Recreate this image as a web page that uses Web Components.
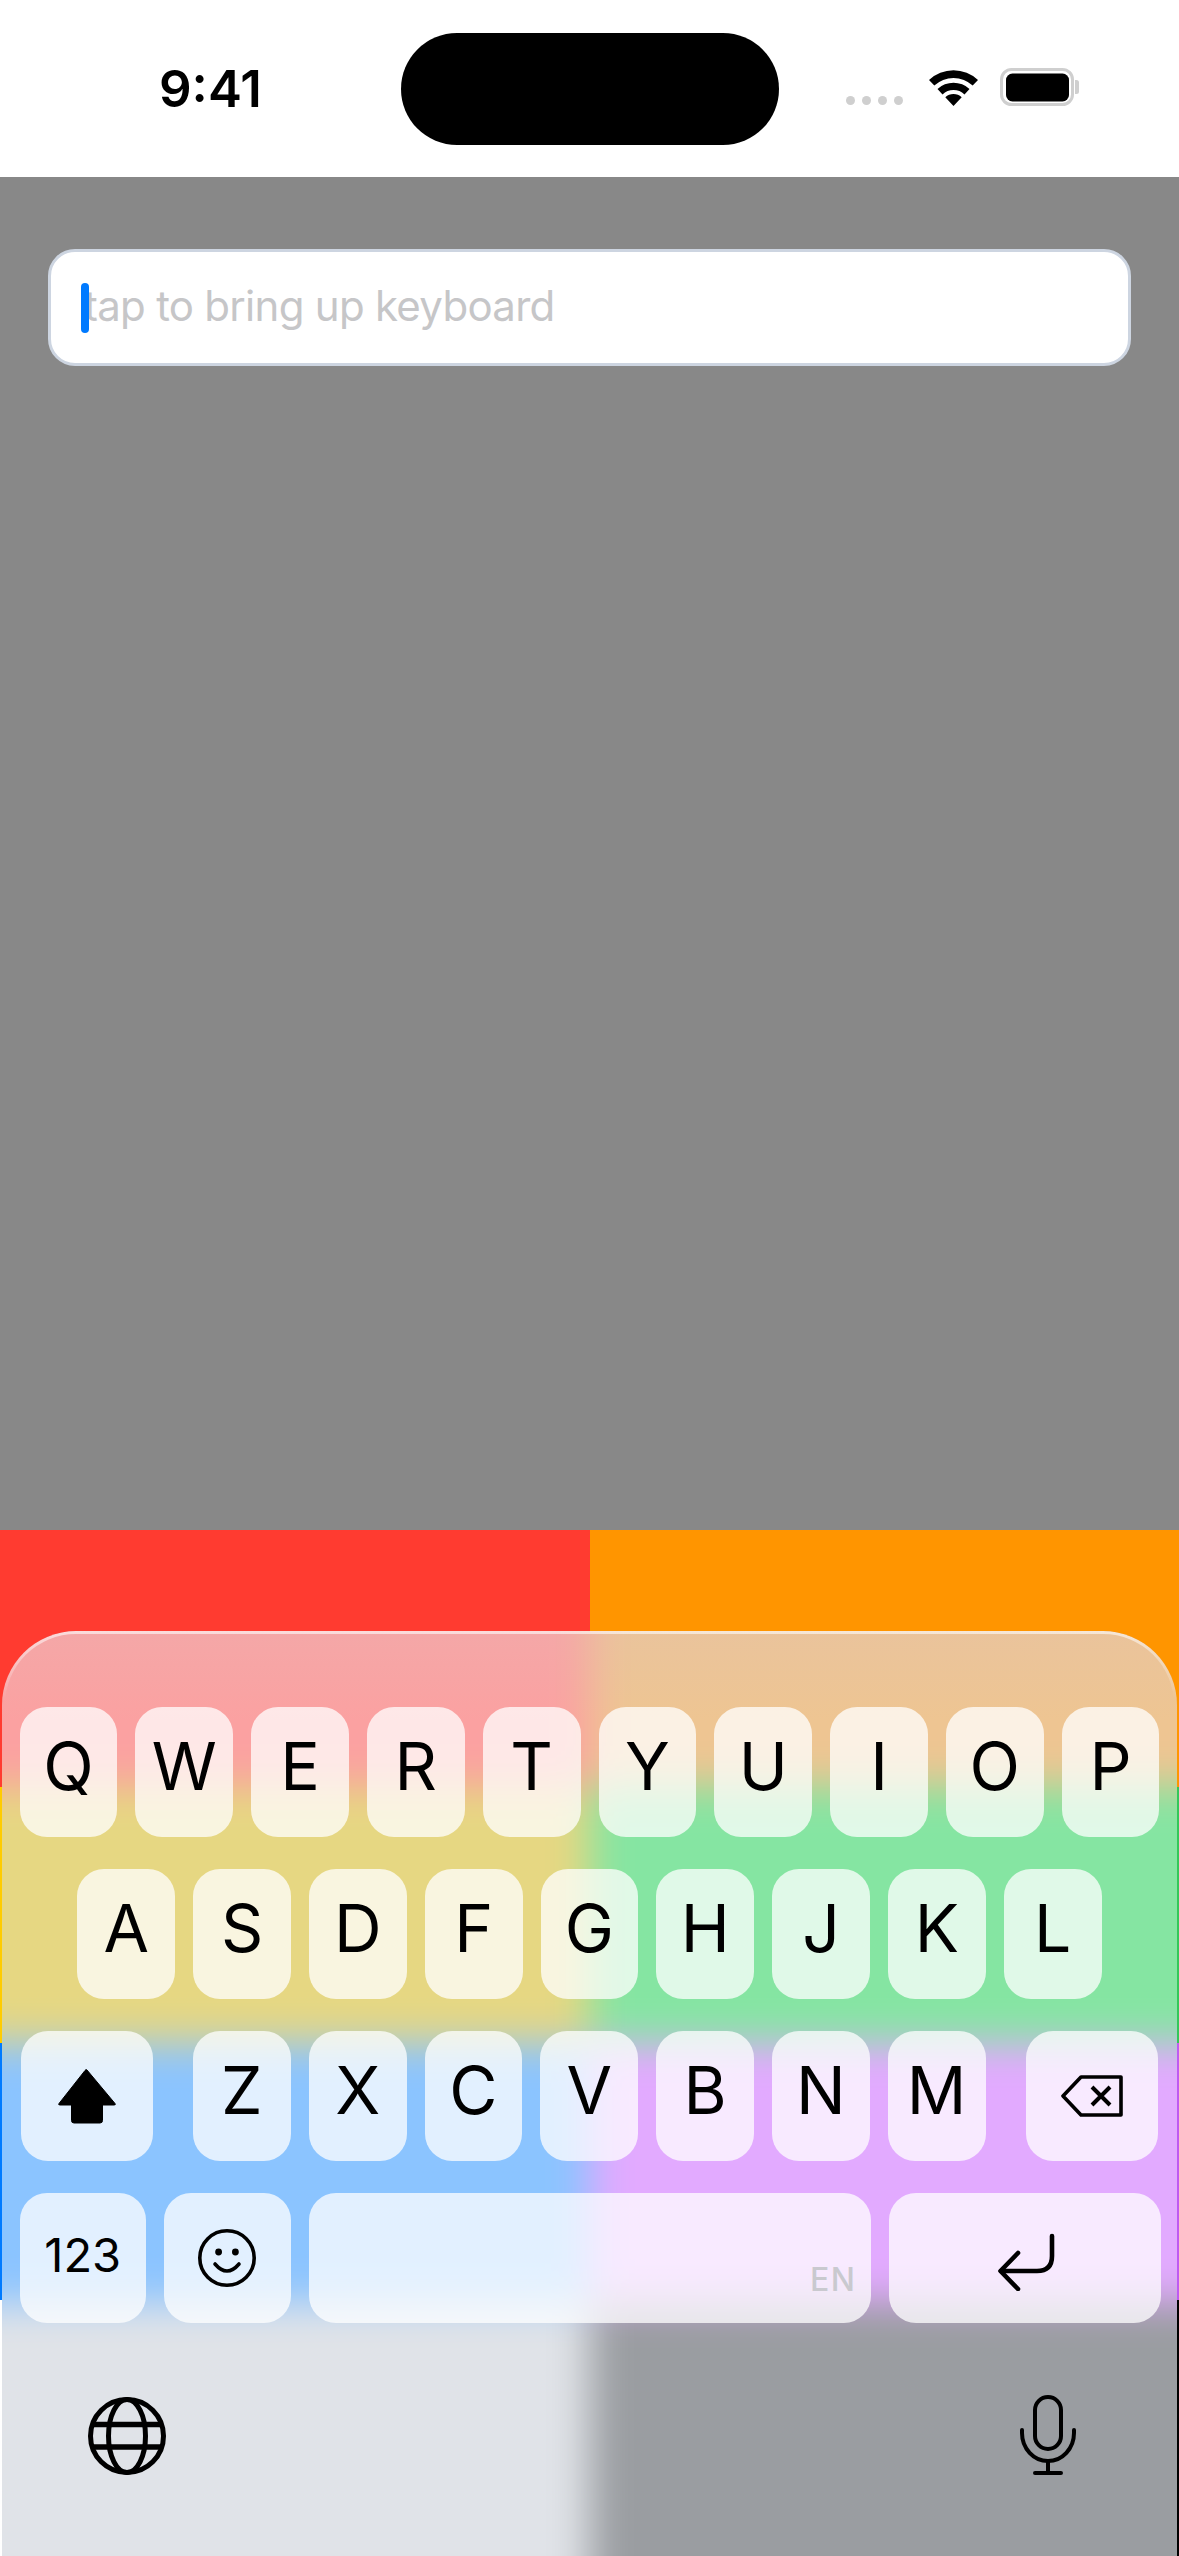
<!DOCTYPE html>
<html lang="en">
<head>
<meta charset="utf-8">
<title>Keyboard</title>
<style>
html,body{margin:0;padding:0;background:#fff;font-family:Inter,"Noto Sans",sans-serif;}
</style>
</head>
<body>
<ios-screen></ios-screen>
<script>
function comp(name, html){
  customElements.define(name, class extends HTMLElement{
    constructor(){super();const r=this.attachShadow({mode:'open'});r.innerHTML=html;}
  });
}
comp('status-bar',`<style>
:host{display:flex;height:177px;background:#fff;align-items:flex-start;color:#000;}
.time{width:242px;margin-left:159px;margin-top:59px;font:600 51px/60px Inter,sans-serif;}
.island{width:378px;height:112px;margin-top:33px;border-radius:56px;background:#000;}
.right{display:flex;align-items:flex-start;margin-left:67px;}
.dots{display:flex;gap:7px;margin-top:96px;margin-right:26px;}
.dots i{display:block;width:9px;height:9px;border-radius:50%;background:#cfcfcf;}
.wifi{display:block;width:49px;height:36px;margin-top:70px;margin-right:22px;}
.bat{display:block;width:80px;height:38px;margin-top:68px;}
</style>
<div class="time">9:41</div>
<div class="island"></div>
<div class="right">
  <div class="dots"><i></i><i></i><i></i><i></i></div>
  <svg class="wifi" viewBox="0 0 49 36"><path d="M0 10A35.7 35.7 0 0 1 49 10L43.7 15.6A28 28 0 0 0 5.3 15.6ZM8.5 19A23.3 23.3 0 0 1 40.5 19L35.5 24.4A16 16 0 0 0 13.5 24.4ZM16.3 27.3A12 12 0 0 1 32.7 27.3L24.5 36Z"/></svg>
  <svg class="bat" viewBox="0 0 80 38"><rect x="1.5" y="1.5" width="71" height="35" rx="10" fill="none" stroke="#cfcfcf" stroke-width="3"/><rect x="6" y="5.5" width="63" height="28" rx="6.5"/><path d="M75 12h1.5a2.5 2.5 0 0 1 2.5 2.5v9a2.5 2.5 0 0 1-2.5 2.5H75Z" fill="#cfcfcf"/></svg>
</div>`);

comp('text-field',`<style>
:host{display:flex;position:relative;align-items:center;box-sizing:border-box;height:117px;border:3px solid #cdd5e1;border-radius:27px;background:#fff;padding:0 0 3px 33px;color:#c6c6c8;font:400 42px/50px Inter,sans-serif;letter-spacing:-.72px;}
.cursor{position:absolute;left:30px;top:31px;width:8px;height:50px;border-radius:4px;background:#007aff;}
</style><span class="cursor"></span><slot></slot>`);

comp('app-area',`<style>
:host{display:block;height:1353px;background:#888;box-sizing:border-box;padding:72px 48px 0;}
</style><slot></slot>`);

comp('color-stage',`<style>
:host{display:block;position:relative;height:1026px;overflow:hidden;}
.grid{display:grid;height:100%;grid-template-columns:589.5px 1fr;grid-template-rows:257px 256px 257px 256px;}
</style>
<div class="grid">
<div style="background:#ff3b30"></div><div style="background:#ff9500"></div>
<div style="background:#ffcc00"></div><div style="background:#34c759"></div>
<div style="background:#007aff"></div><div style="background:#bf5af2"></div>
<div style="background:#fff"></div><div style="background:#000"></div>
</div><slot></slot>`);

comp('kb-key',`<style>
:host{display:flex;position:relative;flex:none;box-sizing:border-box;width:97.8px;height:130px;border-radius:27px;background:rgba(255,255,255,.75);align-items:center;justify-content:center;color:#000;font:400 66px/80px Inter,sans-serif;}
.t{display:block;margin-top:-12px;}
</style><span class="t"><slot></slot></span>`);

comp('kb-row',`<style>
:host{display:flex;gap:18px;justify-content:center;}
</style><slot></slot>`);

comp('kb-keyboard',`<style>
:host{display:flex;flex-direction:column;gap:32px;position:absolute;left:2px;right:2px;top:101px;bottom:0;box-sizing:border-box;padding:76px 17.5px 0 17.5px;border-radius:74px 74px 0 0;overflow:hidden;}
.glass{position:absolute;left:-80px;right:-80px;top:-80px;bottom:-80px;display:grid;grid-template-columns:667.5px 1fr;grid-template-rows:236px 256px 260px 1fr;filter:blur(20px);}
.veil{position:absolute;left:0;right:0;top:0;height:90px;background:linear-gradient(rgba(220,190,190,.22),rgba(220,190,190,0));}
.edge{position:absolute;inset:0;border-radius:inherit;box-sizing:border-box;padding:3px 3px 0;background:linear-gradient(rgba(255,255,255,.6),rgba(255,255,255,0) 70px);-webkit-mask:linear-gradient(#000 0 0) content-box,linear-gradient(#000 0 0);-webkit-mask-composite:xor;mask-composite:exclude;}
kb-row{position:relative;}
.shift,.del{width:132px;}
.between{justify-content:space-between;margin:0 1.5px 0 1px;}
.last{margin-left:1px;}
.group{display:flex;gap:18px;}
.num{width:126.5px;font-size:47px;}
.lab{display:block;margin-top:6px;}
.space{width:562px;}
.ret{width:272px;}
svg{display:block;margin-top:12px;}
.en{position:absolute;right:14px;bottom:25px;font:500 32px/36px Inter,sans-serif;color:#c9c9cf;letter-spacing:1.5px;}
.bottom{display:flex;justify-content:space-between;align-items:flex-start;position:relative;margin:42px 0 0 68px;padding-right:83px;}
.bottom svg{margin-top:0;}
.bottom .mic{margin-top:-2px;}
</style>
<div class="glass">
<div style="background:#fba1a1"></div><div style="background:#eec592"></div>
<div style="background:#e6d782"></div><div style="background:#85e5a2"></div>
<div style="background:#8bc4ff"></div><div style="background:#e2aaff"></div>
<div style="background:#e0e3e8"></div><div style="background:#9a9da1"></div>
</div>
<div class="veil"></div>
<div class="edge"></div>
<kb-row><kb-key>Q</kb-key><kb-key>W</kb-key><kb-key>E</kb-key><kb-key>R</kb-key><kb-key>T</kb-key><kb-key>Y</kb-key><kb-key>U</kb-key><kb-key>I</kb-key><kb-key>O</kb-key><kb-key>P</kb-key></kb-row>
<kb-row><kb-key>A</kb-key><kb-key>S</kb-key><kb-key>D</kb-key><kb-key>F</kb-key><kb-key>G</kb-key><kb-key>H</kb-key><kb-key>J</kb-key><kb-key>K</kb-key><kb-key>L</kb-key></kb-row>
<kb-row class="between">
  <kb-key class="shift"><svg width="62" height="56" viewBox="0 0 62 56"><path d="M31 2 59 35.5Q60 37 58 37H46.5V52.5Q46.5 55 44 55H18Q15.5 55 15.5 52.5V37H4Q2 37 3 35.5L29 2.5Q30 1 31 2Z" stroke="#000" stroke-width="1" stroke-linejoin="round"/></svg></kb-key>
  <div class="group"><kb-key>Z</kb-key><kb-key>X</kb-key><kb-key>C</kb-key><kb-key>V</kb-key><kb-key>B</kb-key><kb-key>N</kb-key><kb-key>M</kb-key></div>
  <kb-key class="del"><svg width="62" height="42" viewBox="0 0 62 42" fill="none" stroke="#000" stroke-width="3.6"><path d="M20 2H60V40H20L2 21Z" stroke-linejoin="round"/><path d="M31 12 49 30M49 12 31 30" stroke-width="4"/></svg></kb-key>
</kb-row>
<kb-row class="last">
  <kb-key class="num"><span class="lab">123</span></kb-key>
  <kb-key class="num"><svg width="60" height="60" viewBox="0 0 60 60"><circle cx="30" cy="30" r="27.2" fill="none" stroke="#000" stroke-width="3.6"/><circle cx="21.6" cy="24" r="3.4"/><circle cx="38.4" cy="24" r="3.4"/><path d="M18 36Q30 50 42 36" fill="none" stroke="#000" stroke-width="3.6" stroke-linecap="round"/></svg></kb-key>
  <kb-key class="space"><span class="en">EN</span></kb-key>
  <kb-key class="ret"><svg width="60" height="58" viewBox="0 0 60 58" style="transform:translate(2px,4px)" fill="none" stroke="#000" stroke-width="4.6" stroke-linecap="round" stroke-linejoin="round"><path d="M55 3V23Q55 38 40 38H4"/><path d="M21 20 3.500 38 21 56"/></svg></kb-key>
</kb-row>
<div class="bottom">
  <svg width="78" height="78" viewBox="0 0 78 78" fill="none" stroke="#000" stroke-width="5"><circle cx="39" cy="39" r="36.5"/><ellipse cx="39" cy="39" rx="18.5" ry="36.500"/><path d="M6 27.500H72M6 50H72" stroke-width="5.500"/></svg>
  <svg class="mic" width="58" height="82" viewBox="0 0 58 82" fill="none" stroke="#000" stroke-width="4" stroke-linecap="round"><rect x="16" y="2" width="26" height="52" rx="13"/><path d="M3 35V38A26 28 0 0 0 55 38V35"/><path d="M29 66V78M16 78H42"/></svg>
</div>`);

comp('ios-screen',`<style>
:host{display:block;width:1179px;height:2556px;overflow:hidden;position:relative;font-family:Inter,sans-serif;}
</style>
<status-bar></status-bar>
<app-area><text-field>tap to bring up keyboard</text-field></app-area>
<color-stage><kb-keyboard></kb-keyboard></color-stage>`);
</script>
</body>
</html>
